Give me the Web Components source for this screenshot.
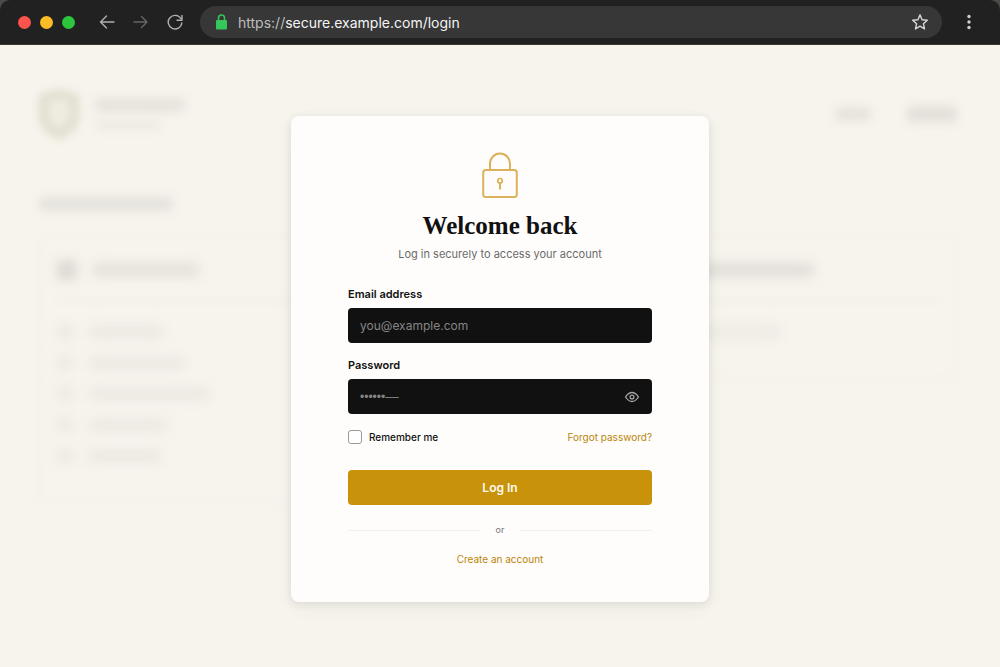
<!DOCTYPE html>
<html lang="en">
<head>
<meta charset="utf-8">
<meta name="viewport" content="width=device-width, initial-scale=1">
<title>Log in</title>
<style>
  body { margin: 0; min-height: 100vh; font-family: Inter, "Liberation Sans", sans-serif; color: #111; background: #f7f4ed; }
</style>
</head>
<body>
<login-app></login-app>
<script>
const define = (name, html, setup) => {
  const template = document.createElement('template');
  template.innerHTML = html;
  customElements.define(name, class extends HTMLElement {
    constructor() {
      super();
      this.attachShadow({ mode: 'open' }).append(template.content.cloneNode(true));
    }
    connectedCallback() { if (setup) setup(this, this.shadowRoot); }
  });
};

define('browser-bar', `
<style>
  :host { display: block; background: #4a4a48; }
  header { display: flex; align-items: center; height: 44px; padding: 0 23px 0 18px; background: #212121; border-bottom: 1px solid #3a3936; border-radius: 10px 10px 0 0; }
  .lights { display: flex; gap: 9px; margin-right: 24px; }
  .lights i { width: 13px; height: 13px; border-radius: 50%; }
  nav { display: flex; gap: 18px; margin-right: 17px; }
  button { display: grid; place-items: center; padding: 0; border: 0; background: none; color: #b0b0b0; }
  button:disabled { color: #666; }
  svg { display: block; fill: none; stroke: currentColor; stroke-width: 1.4; stroke-linecap: round; stroke-linejoin: round; }
  .address { flex: 1; display: flex; align-items: center; gap: 10px; height: 32px; padding: 0 14px 0 15px; border-radius: 16px; background: #373737; color: #f4f4f4; font-size: 14px; }
  .address span { flex: 1; }
  .address .scheme { color: #bdbdbd; }
  .star { color: #d6d6d6; }
  .more { margin-left: 19px; color: #d0d0d0; }
</style>
<header>
  <div class="lights"><i style="background:#fb544c"></i><i style="background:#fcbc26"></i><i style="background:#2bc63c"></i></div>
  <nav>
    <button aria-label="Back"><svg width="16" height="16" viewBox="0 0 16 16"><path d="M15 8H1.5M7.5 2L1.5 8l6 6"/></svg></button>
    <button aria-label="Forward" disabled><svg width="16" height="16" viewBox="0 0 16 16"><path d="M1 8h13M8.500 2.500l5.500 5.500-5.500 5.500"/></svg></button>
    <button aria-label="Reload"><svg width="16" height="16" viewBox="0 0 16 16"><path d="M13.800 4.500A6.800 6.800 0 1 0 14.800 9M15 1.500v4.700h-5"/></svg></button>
  </nav>
  <div class="address">
    <svg width="13" height="16" viewBox="0 0 13 16"><rect x="1" y="6" width="11" height="9.500" rx="1" fill="#35c759" stroke="none"/><path d="M3.500 6V4a3 3 0 0 1 6 0v2" stroke="#35c759" stroke-width="1.500"/></svg>
    <span><span class="scheme">https://</span>secure.example.com/login</span>
    <button class="star" aria-label="Bookmark"><svg width="16" height="16" viewBox="0 0 16 16"><path d="M8 .9l2.100 4.800 5.200.5-3.900 3.500 1.100 5.200L8 12.200l-4.500 2.700 1.100-5.200L.7 6.200l5.200-.5z"/></svg></button>
  </div>
  <button class="more" aria-label="Menu"><svg width="16" height="16" viewBox="0 0 16 16"><g fill="currentColor" stroke="none"><circle cx="8" cy="2.500" r="1.700"/><circle cx="8" cy="8" r="1.700"/><circle cx="8" cy="13.500" r="1.700"/></g></svg></button>
</header>`);

define('skeleton-bar', `
<style>
  :host { display: block; width: var(--w, 80px); height: var(--h, 10px); border-radius: 4px; background: var(--c, #ebe8e2); filter: blur(5px); flex: none; }
</style>`);

define('page-backdrop', `
<style>
  :host { display: block; padding: 44px 43px 44px 39px; box-sizing: border-box; }
  .top, .brand, .links, .line { display: flex; align-items: center; }
  .top { justify-content: space-between; }
  .brand { gap: 16px; }
  .brand svg { display: block; filter: blur(4px); }
  .names { display: grid; gap: 8px; }
  .links { gap: 36px; }
  .heading { margin: 58px 0 24px; }
  .columns { display: grid; grid-template-columns: 1fr 1fr; gap: 24px; }
  .panel { padding: 17px 16px 30px; border: 2px solid #f3f0e9; border-radius: 8px; filter: blur(3px); }
  .line { gap: 16px; height: 31px; }
  .rule { height: 3px; margin: 14px 0; background: #f1eee8; }
  .right { padding-left: 140px; }
</style>
<div class="top">
  <div class="brand">
    <svg width="40" height="50" viewBox="0 0 40 50"><path d="M20 4L36 9v18q0 12-16 19Q4 39 4 27V9z" fill="#eeebdf" stroke="#dfdccd" stroke-width="8"/></svg>
    <div class="names">
      <skeleton-bar style="--w:90px;--h:14px;--c:#e6e3dd"></skeleton-bar>
      <skeleton-bar style="--w:66px;--c:#edeae3"></skeleton-bar>
    </div>
  </div>
  <div class="links">
    <skeleton-bar style="--w:36px;--h:14px;--c:#e6e3dd"></skeleton-bar>
    <skeleton-bar style="--w:50px;--h:16px;--c:#e3e0da"></skeleton-bar>
  </div>
</div>
<skeleton-bar class="heading" style="--w:134px;--h:14px;--c:#e5e2dc"></skeleton-bar>
<div class="columns">
  <div class="panel">
    <div class="line"><skeleton-bar style="--w:20px;--h:20px;--c:#dcd9d3"></skeleton-bar><skeleton-bar style="--w:106px;--h:14px;--c:#e4e1db"></skeleton-bar></div>
    <div class="rule"></div>
    <div class="line"><skeleton-bar style="--w:16px;--h:14px"></skeleton-bar><skeleton-bar style="--w:74px;--h:12px"></skeleton-bar></div>
    <div class="line"><skeleton-bar style="--w:16px;--h:14px"></skeleton-bar><skeleton-bar style="--w:96px;--h:12px"></skeleton-bar></div>
    <div class="line"><skeleton-bar style="--w:16px;--h:14px"></skeleton-bar><skeleton-bar style="--w:120px;--h:12px"></skeleton-bar></div>
    <div class="line"><skeleton-bar style="--w:16px;--h:14px"></skeleton-bar><skeleton-bar style="--w:78px;--h:12px"></skeleton-bar></div>
    <div class="line"><skeleton-bar style="--w:16px;--h:14px"></skeleton-bar><skeleton-bar style="--w:72px;--h:12px"></skeleton-bar></div>
  </div>
  <div>
    <div class="panel right">
      <div class="line"><skeleton-bar style="--w:162px;--h:14px;--c:#e1ded8"></skeleton-bar></div>
      <div class="rule"></div>
      <div class="line"><skeleton-bar style="--w:130px;--h:12px;--c:#edeae4"></skeleton-bar></div>
    </div>
  </div>
</div>`);

define('form-field', `
<style>
  :host { display: grid; gap: 6px; }
  label { font-size: 11px; line-height: 16px; font-weight: 600; color: #111; }
  .box { display: flex; align-items: center; height: 35px; padding: 0 12px; border-radius: 4px; background: #111; box-sizing: border-box; }
  input { flex: 1; min-width: 0; padding: 0; border: 0; outline: 0; background: none; color: #eee; font: 12px/16px Inter, sans-serif; }
  input::placeholder { color: #858585; opacity: 1; }
  input[type=password] { font-family: "Liberation Sans", sans-serif; }
</style>
<label for="control"></label>
<div class="box"><input id="control"><slot></slot></div>`, (host, root) => {
  root.querySelector('label').textContent = host.getAttribute('label');
  const input = root.querySelector('input');
  input.type = host.getAttribute('type');
  input.placeholder = host.getAttribute('placeholder');
});

define('login-card', `
<style>
  :host { display: block; width: 418px; max-width: 100%; padding: 36px 57px 35px; box-sizing: border-box; border-radius: 8px; background: #fefdfb; box-shadow: 0 2px 8px #2a2a301a, 0 6px 20px #2a2a300a; }
  .lock { display: block; margin: 0 auto 12px; }
  h1 { margin: 0 0 4px; font: bold 25px/32px "Liberation Serif", serif; text-align: center; color: #111; }
  p { margin: 0 0 24px; font-size: 11px; line-height: 16px; text-align: center; color: #6b6b6b; }
  form-field + form-field { margin-top: 14px; }
  .eye { padding: 0; border: 0; background: none; color: #a5a5a5; }
  .eye svg { display: block; }
  .row { display: flex; justify-content: space-between; align-items: center; margin: 15px 0 25px; font-size: 10px; line-height: 16px; }
  .row label { display: flex; align-items: center; gap: 7px; font-weight: 500; }
  input { appearance: none; width: 14px; height: 14px; margin: 0; border: 1px solid #999; border-radius: 3px; background: #fff; }
  input:checked { background: #c8930a; }
  a { color: #b98509; text-decoration: none; }
  .submit { display: block; width: 100%; height: 35px; padding: 0; border: 0; border-radius: 4px; background: #c8930a; color: #fffbee; font: 600 12px/16px Inter, sans-serif; }
  .or { display: flex; align-items: center; gap: 16px; margin: 17px 0 13px; font-size: 9px; line-height: 16px; color: #777; }
  .or::before, .or::after { content: ""; flex: 1; height: 1px; background: #f2f0ed; }
  .create { display: block; text-align: center; font-size: 10px; line-height: 16px; }
</style>
<svg class="lock" width="36" height="46" viewBox="0 0 36 46" fill="none" stroke="#dbb25b" stroke-width="2"><rect x="1.200" y="18" width="33.600" height="27" rx="2.500"/><path d="M8 18v-6.500a10 10 0 0 1 20 0V18"/><circle cx="18" cy="28.800" r="2.300" stroke-width="1.700"/><path d="M18 31.100v6.400"/></svg>
<h1>Welcome back</h1>
<p>Log in securely to access your account</p>
<form>
  <form-field label="Email address" type="email" placeholder="you@example.com"></form-field>
  <form-field label="Password" type="password" placeholder="••••••––">
    <button class="eye" type="button" aria-label="Show password"><svg width="16" height="14" viewBox="0 0 16 14" fill="none" stroke="currentColor" stroke-width="1.300"><path d="M1.500 7Q4.500 2.500 8 2.500T14.500 7Q11.500 11.500 8 11.500T1.500 7z"/><circle cx="8" cy="7" r="1.900"/></svg></button>
  </form-field>
  <div class="row"><label><input type="checkbox">Remember me</label><a href="#forgot">Forgot password?</a></div>
  <button class="submit" type="button">Log In</button>
  <div class="or">or</div>
  <a class="create" href="#create">Create an account</a>
</form>`);

define('login-app', `
<style>
  :host { display: flex; flex-direction: column; min-height: 100vh; }
  main { flex: 1; display: grid; grid-template-columns: minmax(0, 1fr); background: #f7f4ed; }
  main > * { grid-area: 1 / 1; }
  login-card { margin: 71px auto 64px; place-self: start center; position: relative; }
</style>
<browser-bar></browser-bar>
<main>
  <page-backdrop aria-hidden="true"></page-backdrop>
  <login-card></login-card>
</main>`);
</script>
</body>
</html>
